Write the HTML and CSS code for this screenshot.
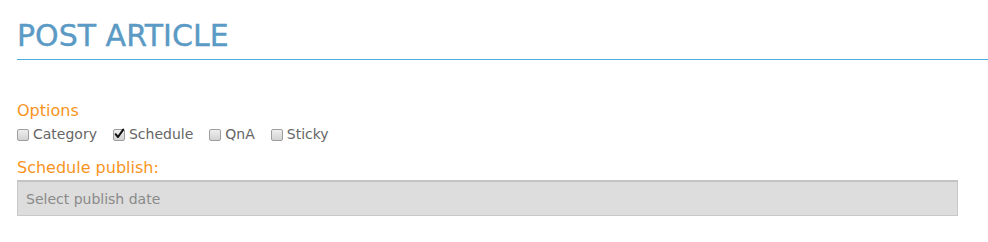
FILE: index.html
```html
<!DOCTYPE html>
<html>
<head>
<meta charset="utf-8">
<link rel="stylesheet" href="styles.css">
</head>
<body>
<div class="page">
  <h1 class="title">POST ARTICLE</h1>
  <div class="section-label options-label">Options</div>
  <div class="options">
    <label class="opt"><span class="box"></span>Category</label>
    <label class="opt"><span class="box"><svg viewBox="0 0 12 12" width="12" height="12"><path d="M2.6 6.2 L5 9 L10.2 1.6" fill="none" stroke="#111" stroke-width="2" stroke-linecap="round" stroke-linejoin="round"/></svg></span>Schedule</label>
    <label class="opt"><span class="box"></span>QnA</label>
    <label class="opt"><span class="box"></span>Sticky</label>
  </div>
  <div class="section-label publish-label">Schedule publish:</div>
  <input class="date-input" type="text" placeholder="Select publish date">
</div>
</body>
</html>
```

FILE: styles.css
```css
html, body {
  margin: 0;
  padding: 0;
  background: #ffffff;
}
.page {
  padding: 18px 0 0 17px;
  font-family: "DejaVu Sans", sans-serif;
}
.title {
  margin: 0;
  font-size: 30px;
  font-weight: normal;
  line-height: 35px;
  color: #5a9ac4;
  padding-bottom: 6px;
  border-bottom: 1px solid #4faee0;
  -webkit-text-stroke: 0.4px #5a9ac4;
}
.section-label {
  font-size: 16px;
  line-height: 20px;
  color: #f7941d;
}
.options-label {
  margin-top: 41px;
}
.options {
  display: flex;
  align-items: center;
  margin-top: 3px;
  font-size: 14px;
  line-height: 20px;
  color: #666666;
}
.opt {
  display: flex;
  align-items: center;
  margin-right: 16px;
}
.box {
  position: relative;
  box-sizing: border-box;
  width: 12px;
  height: 12px;
  margin-right: 4px;
  margin-top: 1px;
  border: 1px solid #9e9e9e;
  border-radius: 2px;
  background: linear-gradient(#eeeeee, #d2d2d2);
}
.box svg {
  position: absolute;
  left: -1px;
  top: -2px;
}
.publish-label {
  margin-top: 14px;
}
.date-input {
  display: block;
  box-sizing: border-box;
  width: 941px;
  height: 36px;
  margin: 2px 0 0 0;
  padding: 0 8px;
  border: 1px solid #c8c8c8;
  border-top: 2px solid #c4c4c4;
  background: #dddddd;
  font-family: "DejaVu Sans", sans-serif;
  font-size: 14px;
  color: #555555;
  outline: none;
}
.date-input::placeholder {
  color: #8a8a8a;
}
```
